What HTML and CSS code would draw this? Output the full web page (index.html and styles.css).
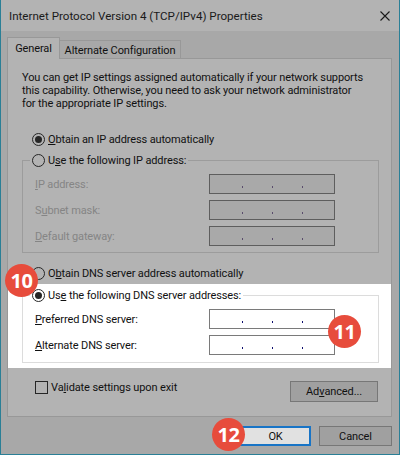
FILE: index.html
```html
<!DOCTYPE html>
<html>
<head>
<meta charset="utf-8">
<link rel="stylesheet" href="styles.css">
</head>
<body>
<div class="win">
  <div class="titlebar">
    <span class="title">Internet Protocol Version 4 (TCP/IPv4) Properties</span>
    <svg class="close" width="10" height="10" viewBox="0 0 10 10"><path d="M0.5 0.5 L9.5 9.5 M9.5 0.5 L0.5 9.5" stroke="#1a1a1a" stroke-width="1.1" fill="none"/></svg>
  </div>
  <div class="body">
    <div class="tabs">
      <div class="tab active">General</div>
      <div class="tab">Alternate Configuration</div>
    </div>
    <div class="panel">
      <p class="intro">You can get IP settings assigned automatically if your network supports<br>this capability. Otherwise, you need to ask your network administrator<br>for the appropriate IP settings.</p>
      <div class="opt r1"><span class="radio on"></span><span><u>O</u>btain an IP address automatically</span></div>
      <fieldset class="group">
        <legend class="opt"><span class="radio"></span><span>U<u>s</u>e the following IP address:</span></legend>
        <div class="rows">
          <span class="lbl dis"><u>I</u>P address:</span><span class="field dis"><i></i><i></i><i></i></span>
          <span class="lbl dis">S<u>u</u>bnet mask:</span><span class="field dis"><i></i><i></i><i></i></span>
          <span class="lbl dis"><u>D</u>efault gateway:</span><span class="field dis"><i></i><i></i><i></i></span>
        </div>
      </fieldset>
      <div class="opt r3"><span class="radio"></span><span>O<u>b</u>tain DNS server address automatically</span></div>
      <div class="hl">
        <fieldset class="group g2">
          <legend class="opt"><span class="radio on"></span><span>Us<u>e</u> the following DNS server addresses:</span></legend>
          <div class="rows">
            <span class="lbl"><u>P</u>referred DNS server:</span><span class="field"><i></i><i></i><i></i></span>
            <span class="lbl"><u>A</u>lternate DNS server:</span><span class="field"><i></i><i></i><i></i></span>
          </div>
        </fieldset>
      </div>
      <div class="bottomrow">
        <div class="chk"><span class="box"></span><span>Va<u>l</u>idate settings upon exit</span></div>
        <div class="btn adv">Ad<u>v</u>anced...</div>
      </div>
    </div>
    <div class="footer">
      <div class="btn ok">OK</div>
      <div class="btn cancel">Cancel</div>
    </div>
  </div>
  <div class="badge b10">10</div>
  <div class="badge b11">11</div>
  <div class="badge b12">12</div>
</div>
</body>
</html>
```
FILE: styles.css
```css
html, body {
  margin: 0;
  padding: 0;
  background: #a8a8a8;
}
.win {
  position: relative;
  width: 400px;
  height: 455px;
  box-sizing: border-box;
  border: 1px solid #2a7f96;
  border-top: none;
  background: #a8a8a8;
  font-family: Roboto, "Noto Sans", sans-serif;
  font-size: 11px;
  letter-spacing: -0.12px;
  color: #111;
  overflow: hidden;
  display: flex;
  flex-direction: column;
}
.titlebar {
  height: 31px;
  flex: none;
  background: #b3b3b3;
  display: flex;
  align-items: center;
  padding: 0 9px 0 8px;
}
.title {
  font-size: 11.6px;
  letter-spacing: 0;
  white-space: nowrap;
  color: #1a1a1a;
}
.close {
  margin-left: auto;
  display: block;
}
.body {
  flex: 1;
  display: flex;
  flex-direction: column;
  padding-top: 6px;
}
.tabs {
  display: flex;
  align-items: flex-end;
  height: 22px;
  margin: 0 0 -1px 6px;
  position: relative;
  z-index: 1;
}
.tab {
  box-sizing: border-box;
  height: 18px;
  margin-bottom: 1px;
  width: 121px;
  border: 1px solid #989898;
  border-left: none;
  border-bottom: none;
  background: #a8a8a8;
  display: flex;
  align-items: center;
  justify-content: center;
  white-space: nowrap;
  padding-top: 1px;
}
.tab.active {
  height: 22px;
  margin-bottom: 0;
  width: 53px;
  border-left: 1px solid #989898;
  background: #b3b3b3;
  padding-top: 0;
  padding-bottom: 1px;
}
.panel {
  margin: 0 7px 0 6px;
  border: 1px solid #989898;
  background: #b3b3b3;
  padding-bottom: 14px;
}
.intro {
  margin: 12px 14px 0;
  line-height: 13px;
  height: 39px;
  white-space: nowrap;
}
.opt {
  display: flex;
  align-items: center;
  height: 16px;
  white-space: nowrap;
}
.r1 {
  margin: 21px 0 0 24px;
}
.r3 {
  margin: 12px 0 0 24px;
}
.radio {
  box-sizing: border-box;
  width: 13px;
  height: 13px;
  border: 1px solid #262626;
  border-radius: 50%;
  margin-right: 3px;
  display: flex;
  align-items: center;
  justify-content: center;
  flex: none;
}
.radio.on::after {
  content: "";
  width: 7px;
  height: 7px;
  border-radius: 50%;
  background: #262626;
}
.group {
  margin: 5px 0 0 14px;
  width: 357px;
  box-sizing: border-box;
  border: 1px solid #9c9c9c;
  padding: 6px 0 6px 7px;
  min-width: 0;
}
.group legend {
  padding: 0 2px;
  margin: 0;
}
.rows {
  margin-left: 5px;
  display: grid;
  grid-template-columns: 174px 126px;
  grid-auto-rows: 20px;
  row-gap: 6px;
  align-items: center;
}
.lbl {
  white-space: nowrap;
}
.lbl.dis {
  color: #858585;
}
.field {
  box-sizing: border-box;
  height: 20px;
  border: 1px solid #7a7a7a;
  background: #fff;
  display: flex;
  align-items: flex-start;
  padding: 11px 0 0 32px;
  gap: 29px;
}
.field i {
  display: block;
  width: 1px;
  height: 2px;
  background: #101070;
}
.field.dis {
  border-color: #5e5e5e;
  background: #a9a9a9;
}
.field.dis i {
  background: #5a4c6c;
}
.hl {
  margin-top: 3px;
  background: #fff;
  padding: 3px 0 5px;
}
.group.g2 {
  margin-top: 0;
  border-color: #dcdcdc;
  padding-bottom: 7px;
}
.bottomrow {
  margin: 13px 13px 0 27px;
  height: 21px;
  display: flex;
  align-items: flex-start;
  justify-content: space-between;
}
.chk {
  display: flex;
  align-items: center;
  height: 13px;
  white-space: nowrap;
}
.box {
  box-sizing: border-box;
  width: 13px;
  height: 13px;
  border: 1px solid #262626;
  margin-right: 3px;
}
.btn {
  box-sizing: border-box;
  display: flex;
  align-items: center;
  justify-content: center;
  border: 1px solid #777;
  background: #a0a0a0;
  white-space: nowrap;
}
.adv {
  width: 88px;
  height: 21px;
}
.footer {
  display: flex;
  justify-content: flex-end;
  gap: 8px;
  margin: 9px 7px 0 0;
}
.ok {
  width: 71px;
  height: 20px;
  border: 2px solid #1874c6;
  background: #e1e1e1;
}
.cancel {
  width: 73px;
  height: 20px;
}
u {
  text-decoration-thickness: 1px;
  text-underline-offset: 1px;
}
.badge {
  position: absolute;
  width: 33px;
  height: 33px;
  border-radius: 50%;
  background: #e74c3c;
  color: #fff;
  font-family: "Open Sans", "Noto Sans", sans-serif;
  font-weight: 700;
  font-size: 20px;
  display: flex;
  align-items: center;
  justify-content: center;
  letter-spacing: -0.5px;
}
.b10 { left: 4px; top: 264px; }
.b11 { left: 327px; top: 315px; }
.b12 { left: 211px; top: 418px; }
```
